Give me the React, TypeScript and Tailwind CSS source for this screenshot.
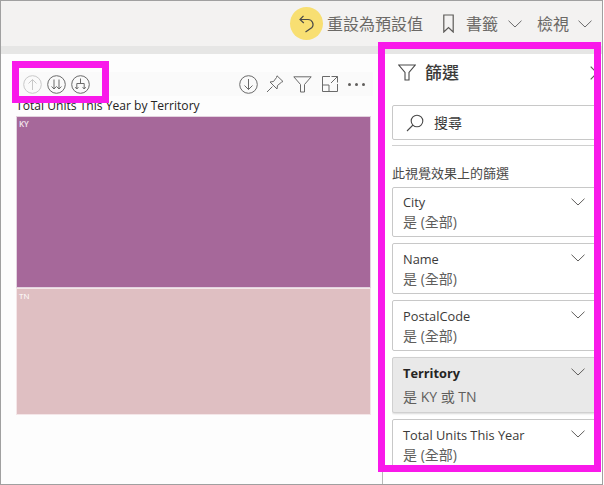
const sans = "font-['Open_Sans','Noto_Sans_CJK_TC',sans-serif]";

function Chevron({ className }: { className: string }) {
  return (
    <svg className={className} viewBox="0 0 14 8" fill="none" stroke="currentColor" strokeWidth="1">
      <path d="M0.5 0.7 L7 7 L13.5 0.7" />
    </svg>
  );
}

function CircleIcon({ children, muted }: { children: React.ReactNode; muted?: boolean }) {
  return (
    <svg
      className={muted ? 'w-[19px] h-[19px] text-[#c8c8c8]' : 'w-[19px] h-[19px] text-[#6a6a6a]'}
      viewBox="0 0 19 19"
      fill="none"
      stroke="currentColor"
      strokeWidth="1"
    >
      <circle cx="9.5" cy="9.5" r="8.8" />
      {children}
    </svg>
  );
}

function FilterCard({ name, value, active, first, h }: { name: string; value: string; active?: boolean; first?: boolean; h: string }) {
  return (
    <div
      className={`${h} shrink-0 relative rounded-[2px] border pl-[10px] overflow-hidden ${first ? 'pt-[4px]' : 'pt-[5px]'} ${
        active ? 'bg-[#e9e9e9] border-[#d0d0d0] shadow-[0_1px_2px_rgba(0,0,0,0.15)]' : 'bg-white border-[#c8c8c8]'
      }`}
    >
      <div className={`text-[12.8px] leading-[20px] ${active ? 'font-bold text-[#252423]' : 'text-[#3b3a39]'}`}>{name}</div>
      <div className={`text-[14px] leading-[20px] text-[#605e5c] ${active ? 'mt-[4px]' : ''}`}>{value}</div>
      <Chevron className="absolute top-[10px] left-[178px] w-[14px] h-[8px] text-[#605e5c]" />
    </div>
  );
}

export default function App() {
  return (
    <div className={`relative w-[603px] h-[485px] overflow-hidden bg-[#f3f2f1] flex flex-col border border-[#a0a0a0] ${sans}`}>
      {/* Top bar */}
      <div className="h-[45px] shrink-0 flex items-center justify-end pr-[10px] text-[#6b6966]">
        <div className="w-[33px] h-[33px] rounded-full bg-[#f8df72] flex items-center justify-center mr-[4px]">
          <svg className="w-[16px] h-[18px] text-[#4a4a48]" viewBox="0 0 16 18" fill="none" stroke="currentColor" strokeWidth="1.2">
            <path d="M1 4.5 H9 A5 5 0 0 1 13 12.5 L6.5 17" />
            <path d="M4.5 0.8 L1 4.5 L4.8 8" />
          </svg>
        </div>
        <span className="text-[16px] leading-none w-[96px]">重設為預設值</span>
        <svg className="ml-[20px] w-[11px] h-[19px] text-[#5c5a58]" viewBox="0 0 11 19" fill="none" stroke="currentColor" strokeWidth="1.2">
          <path d="M0.8 1 H10.2 V18 L5.5 13.5 L0.8 18 Z" />
        </svg>
        <span className="ml-[12px] text-[16px] leading-none w-[32px]">書籤</span>
        <Chevron className="ml-[10px] w-[14px] h-[8px] text-[#6a6a6a]" />
        <span className="ml-[15px] text-[16px] leading-none w-[32px]">檢視</span>
        <Chevron className="ml-[9px] w-[14px] h-[8px] text-[#6a6a6a]" />
      </div>

      <div className="h-[8px] shrink-0 bg-[#e6e6e5]" />

      {/* Body */}
      <div className="flex-1 min-h-0 flex bg-[#fdfdfd]">
        <div className="w-[381px] shrink-0 pl-[15px] pr-[11px] pt-[18px]">
          <div className="h-[24px] w-[357px] bg-[#fafafa] flex items-center pl-[7px] pr-[6px] gap-[5px]">
            <CircleIcon muted>
              <path d="M9.5 15 V4.5 M5.5 8.5 L9.5 4.5 L13.5 8.5" />
            </CircleIcon>
            <CircleIcon>
              <path d="M7 4.5 V14 M4.6 11.5 L7 14 L9.4 11.5 M12 4.5 V14 M9.6 11.5 L12 14 L14.4 11.5" />
            </CircleIcon>
            <CircleIcon>
              <path d="M9.5 3.5 V8.5 M5.8 14 V8.5 H13.2 V14 M4.2 12.2 L5.8 14 L7.4 12.2 M11.6 12.2 L13.2 14 L14.8 12.2" />
            </CircleIcon>
            <div className="flex-1" />
            <CircleIcon>
              <path d="M9.5 4 V14.5 M5.5 10.5 L9.5 14.5 L13.5 10.5" />
            </CircleIcon>
            <svg className="ml-[3px] w-[18px] h-[18px] text-[#6a6a6a]" viewBox="0 0 18 18" fill="none" stroke="currentColor" strokeWidth="1">
              <path d="M11 0.8 L17 6.5 L15.5 7.2 L11.5 10.5 L11 14 L4 7 L7.5 6.5 L10.5 2.5 Z M6.5 11.5 L1 17" />
            </svg>
            <svg className="ml-[4px] w-[19px] h-[17px] text-[#6a6a6a]" viewBox="0 0 19 17" fill="none" stroke="currentColor" strokeWidth="1">
              <path d="M0.8 0.8 H18.2 L11.5 8.5 V16 H7.5 V8.5 Z" />
            </svg>
            <svg className="ml-[5px] w-[16px] h-[16px] text-[#6a6a6a]" viewBox="0 0 16 16" fill="none" stroke="currentColor" strokeWidth="1">
              <path d="M8 0.5 H0.5 V15.5 H15.5 V8 M0.5 9 H7 V15.5 M9.5 0.5 H15.5 V6.5 M15.5 0.5 L9 7" />
            </svg>
            <div className="ml-[5px] mr-[2px] flex gap-[4px]">
              <span className="w-[3px] h-[3px] rounded-full bg-[#605e5c]" />
              <span className="w-[3px] h-[3px] rounded-full bg-[#605e5c]" />
              <span className="w-[3px] h-[3px] rounded-full bg-[#605e5c]" />
            </div>
          </div>
          <div className="h-[20px] text-[12.1px] leading-[20px] text-[#252423] whitespace-nowrap">
            Total Units This Year by Territory
          </div>
          <div className="w-[355px] h-[300px] flex flex-col">
            <div className="h-[172px] bg-[#a6689a] border border-[#e3d2df] px-[2px] pt-[1px] text-[8px] leading-[12px] font-semibold text-[#f4e8f1]">KY</div>
            <div className="h-[127px] bg-[#dfbfc2] border border-[#f4e6e8] px-[2px] pt-[1px] text-[8px] leading-[12px] text-white">TN</div>
          </div>
        </div>

        {/* Filter pane */}
        <div className="w-[221px] shrink-0 border-l border-[#b8b8b8] pl-[9px] overflow-hidden bg-white">
          <div className="h-[37px] w-[204px] flex items-center">
            <svg className="ml-[6px] w-[18px] h-[17px] text-[#4a4a4a]" viewBox="0 0 18 17" fill="none" stroke="currentColor" strokeWidth="1.1">
              <path d="M0.8 1 H17.2 L11 8.5 V16 H7 V8.5 Z" />
            </svg>
            <span className="ml-[9px] text-[17px] leading-none font-medium text-[#3b3a39]">篩選</span>
            <svg className="ml-auto mr-[-2px] w-[8px] h-[14px] shrink-0 text-[#5c5a58]" viewBox="0 0 8 14" fill="none" stroke="currentColor" strokeWidth="1.1">
              <path d="M0.7 0.7 L7 7 L0.7 13.3" />
            </svg>
          </div>
          <div className="w-[204px] h-[35px] mt-[14px] border border-[#c8c8c8] rounded-[2px] flex items-center pl-[13px]">
            <svg className="w-[18px] h-[18px] text-[#4a4a4a]" viewBox="0 0 18 18" fill="none" stroke="currentColor" strokeWidth="1.1">
              <circle cx="11" cy="7" r="5.8" />
              <path d="M7 11 L1 17" />
            </svg>
            <span className="ml-[10px] text-[14px] leading-none text-[#3b3a39]">搜尋</span>
          </div>
          <div className="mt-[5px] w-[204px] border-t border-[#d0d0d0]" />
          <div className="pt-[19px] h-[41px] text-[13px] leading-[17px] text-[#4a4a48] whitespace-nowrap">此視覺效果上的篩選</div>
          <div className="flex flex-col gap-[6px] w-[204px] h-[285px] overflow-hidden">
            <FilterCard h="h-[50px]" name="City" value="是 (全部)" first />
            <FilterCard h="h-[51px]" name="Name" value="是 (全部)" />
            <FilterCard h="h-[51px]" name="PostalCode" value="是 (全部)" />
            <FilterCard h="h-[56px]" name="Territory" value="是 KY 或 TN" active />
            <FilterCard h="h-[51px]" name="Total Units This Year" value="是 (全部)" />
          </div>
        </div>
      </div>

      {/* Magenta callouts over the screenshot */}
      <div className="absolute left-[11px] top-[60px] w-[97px] h-[42px] border-[7px] border-[#f919ea]" />
      <div className="absolute left-[377px] top-[41px] w-[223px] h-[430px] border-[7px] border-[#f919ea]" />
    </div>
  );
}
